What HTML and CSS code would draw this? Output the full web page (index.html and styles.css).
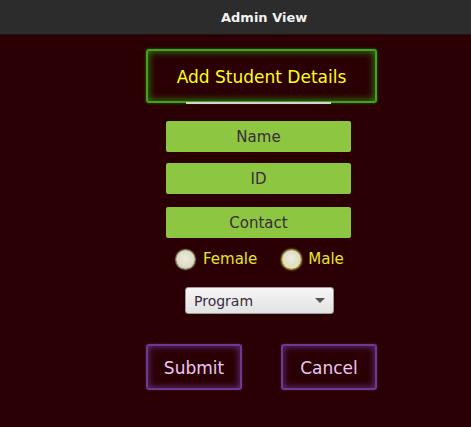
FILE: index.html
```html
<!DOCTYPE html>
<html>
<head>
<meta charset="utf-8">
<link rel="stylesheet" href="styles.css">
</head>
<body>
<div class="titlebar"><span class="title">Admin View</span></div>
<main class="content">
  <div class="heading"><span class="heading-text">Add Student Details</span></div>
  <div class="fields">
    <div class="field">Name</div>
    <div class="field field-id">ID</div>
    <div class="field field-contact">Contact</div>
  </div>
  <div class="radios">
    <label class="radio"><span class="dot"></span>Female</label>
    <label class="radio radio-male"><span class="dot dot-hover"></span>Male</label>
  </div>
  <div class="combo">
    <span class="combo-text">Program</span>
    <span class="arrow"></span>
  </div>
  <div class="buttons">
    <div class="btn">Submit</div>
    <div class="btn">Cancel</div>
  </div>
</main>
</body>
</html>
```
FILE: styles.css
```css
* { box-sizing: border-box; }
html, body {
  margin: 0;
  padding: 0;
  width: 471px;
  height: 427px;
  overflow: hidden;
  background: #2b0004;
  font-family: "DejaVu Sans", sans-serif;
}
.titlebar {
  height: 35px;
  background: #2c2c2c;
  display: flex;
  align-items: center;
  padding-left: 221px;
  border-bottom: 1px solid #241010;
}
.title {
  color: #f2f2f2;
  font-weight: bold;
  font-size: 13px;
}
.content {
  padding-left: 146px;
  padding-top: 14px;
  display: flex;
  flex-direction: column;
  align-items: flex-start;
}
.heading {
  position: relative;
  width: 231px;
  height: 54px;
  border: 2px solid #3ea41c;
  border-radius: 3px;
  box-shadow: inset 0 0 7px 1px #2f7a12, 0 0 3px #2a6a10;
  display: flex;
  align-items: center;
  justify-content: center;
  padding-top: 1px;
}
.heading-text {
  color: #ffff10;
  font-size: 17px;
}
.heading::after {
  content: "";
  position: absolute;
  left: 38px;
  width: 145px;
  bottom: -3px;
  height: 2px;
  background: #d4d4cc;
}
.fields {
  margin-top: 18px;
  margin-left: 20px;
  display: flex;
  flex-direction: column;
}
.field {
  width: 185px;
  height: 31px;
  background: #8dc741;
  border-radius: 2px;
  color: #3b2b3b;
  font-size: 15px;
  display: flex;
  align-items: center;
  justify-content: center;
}
.field-id { margin-top: 11px; }
.field-contact { margin-top: 13px; }
.radios {
  margin-top: 11px;
  margin-left: 30px;
  display: flex;
  align-items: center;
  height: 20px;
}
.radio {
  display: flex;
  align-items: center;
  color: #e6e626;
  font-size: 15px;
}
.radio-male { margin-left: 25px; }
.dot {
  width: 19px;
  height: 19px;
  border-radius: 50%;
  background: radial-gradient(circle at 50% 45%, #ecebdc 0%, #dcdcc8 55%, #b8b890 100%);
  box-shadow: 0 0 1px 1px #8a8a60;
  margin-right: 8px;
}
.dot-hover {
  background: radial-gradient(circle at 50% 45%, #efeedf 0%, #dedecb 50%, #e8e880 85%, #d8d850 100%);
  box-shadow: 0 0 2px 1px #c8c840;
  margin-right: 7px;
}
.combo {
  margin-top: 18px;
  margin-left: 39px;
  width: 149px;
  height: 27px;
  border: 1px solid #9c9c9c;
  border-radius: 3px;
  background: linear-gradient(#f6f6f6, #e2e2e2);
  display: flex;
  align-items: center;
  justify-content: space-between;
  padding: 0 8px 0 8px;
}
.combo-text {
  color: #3a2a3a;
  font-size: 14px;
}
.arrow {
  width: 0;
  height: 0;
  border-left: 5px solid transparent;
  border-right: 5px solid transparent;
  border-top: 5px solid #555555;
}
.buttons {
  margin-top: 30px;
  width: 231px;
  display: flex;
  justify-content: space-between;
}
.btn {
  width: 96px;
  height: 46px;
  border: 2px solid #6e3a8e;
  border-radius: 3px;
  box-shadow: inset 0 0 6px 1px #5a2a78, 0 0 2px #4a2060;
  color: #e8c8f4;
  font-size: 17px;
  display: flex;
  align-items: center;
  justify-content: center;
  padding-top: 2px;
}
```
